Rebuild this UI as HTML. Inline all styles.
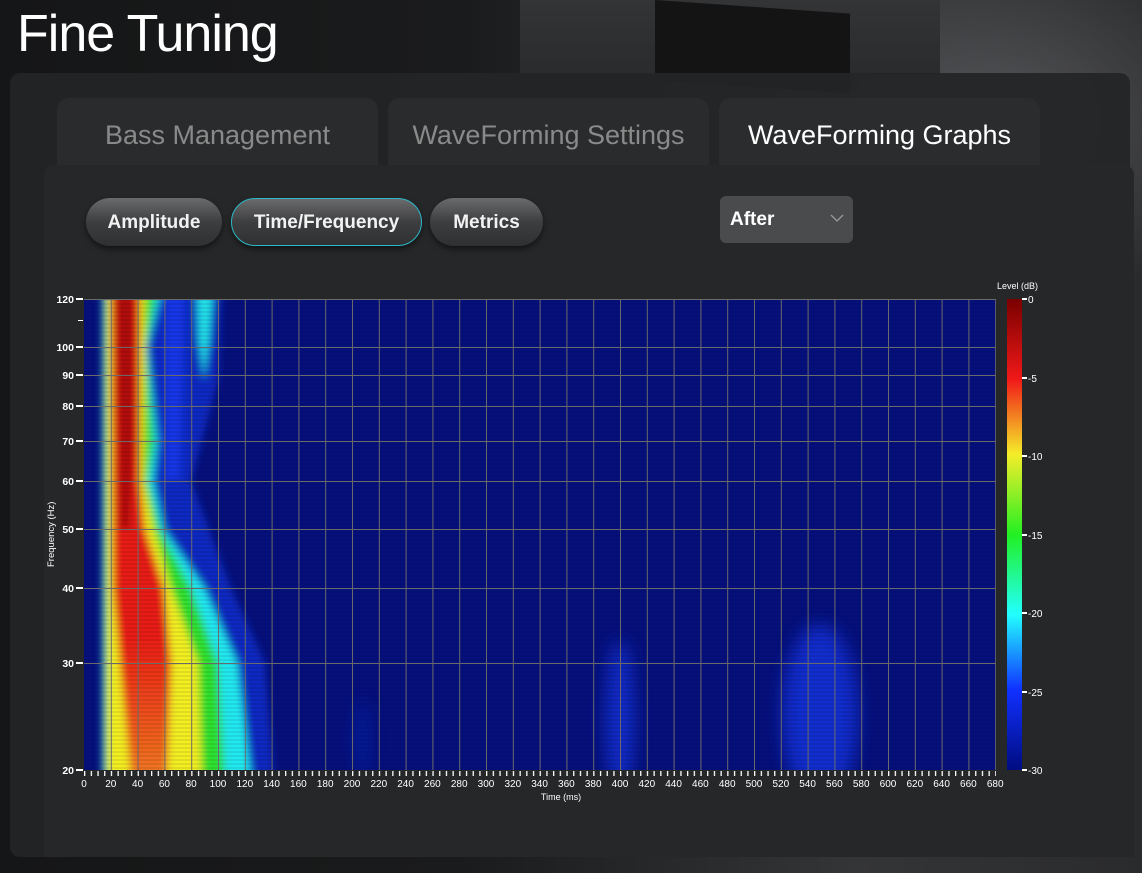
<!DOCTYPE html>
<html><head><meta charset="utf-8"><style>
*{margin:0;padding:0;box-sizing:border-box}
body{width:1142px;height:873px;overflow:hidden;background:#1b1c1d;font-family:"Liberation Sans",sans-serif;position:relative}
.bg{position:absolute;inset:0;background:
radial-gradient(ellipse 380px 260px at 1000px 120px,rgba(120,120,125,.5),transparent 70%),
linear-gradient(90deg,#151617 0,#1a1b1c 40%,#343537 75%,#2a2b2c 100%);}
.dev{position:absolute;left:520px;top:0;width:420px;height:75px;background:linear-gradient(180deg,#333436,#2a2b2d)}
.dev2{position:absolute;left:655px;top:0;width:195px;height:80px;background:#141414;transform:skewY(4deg);transform-origin:left top}
h1{position:absolute;left:17px;top:4px;color:#fff;font-size:52px;font-weight:normal;letter-spacing:-1px}
.panel{position:absolute;left:10px;top:73px;width:1120px;height:784px;border-radius:10px;background:rgba(36,37,38,.93)}
.tab{position:absolute;top:98px;height:70px;width:321px;border-radius:12px 12px 0 0;background:#2a2b2c;color:#8a8a8a;font-size:27px;text-align:center;line-height:74px}
.tab.on{background:#2b2c2d;color:#fff}
.inner{position:absolute;left:44px;top:165px;width:1090px;height:692px;background:#262728;border-radius:10px 10px 0 0}
.btn{position:absolute;top:198px;height:48px;border-radius:24px;background:linear-gradient(#6a6b6d,#3d3e40 50%,#2f3031);color:#f2f2f2;font-size:19px;font-weight:bold;text-align:center;line-height:50px;box-shadow:0 3px 6px rgba(0,0,0,.5)}
.sel{position:absolute;left:720px;top:196px;width:133px;height:47px;border-radius:6px;background:#4a4b4d;color:#fff;font-size:19px;font-weight:bold;line-height:47px;padding-left:10px}
svg text{font-family:"Liberation Sans",sans-serif;fill:#fff}
</style></head><body>
<div class="bg"></div><div class="dev"></div><div class="dev2"></div>
<h1>Fine Tuning</h1>
<div class="panel"></div>
<div class="tab" style="left:57px">Bass Management</div>
<div class="tab" style="left:388px">WaveForming Settings</div>
<div class="tab on" style="left:719px">WaveForming Graphs</div>
<div class="inner"></div>
<div class="btn" style="left:86px;width:136px">Amplitude</div>
<div class="btn" style="left:231px;width:191px;border:1px solid #2bb8c8;line-height:48px">Time/Frequency</div>
<div class="btn" style="left:430px;width:113px">Metrics</div>
<div class="sel">After<svg style="position:absolute;right:9px;top:18px" width="14" height="9"><path d="M1 1 L7 7 L13 1" fill="none" stroke="#9a9a9a" stroke-width="1.3"/></svg></div>
<svg style="position:absolute;left:0;top:0" width="1142" height="873">
<defs>
<filter id="b" x="-20%" y="-20%" width="140%" height="140%"><feGaussianBlur stdDeviation="4"/></filter>
<filter id="b2" x="-50%" y="-50%" width="200%" height="200%"><feGaussianBlur stdDeviation="9"/></filter>
<clipPath id="c"><rect x="84" y="299" width="912" height="471"/></clipPath>
<linearGradient id="rg" x1="0" y1="0" x2="0" y2="1"><stop offset="0.7" stop-color="#e81a14"/><stop offset="1" stop-color="#f07a22"/></linearGradient>
<linearGradient id="cb" x1="0" y1="0" x2="0" y2="1"><stop offset="0" stop-color="#7a0000"/><stop offset=".17" stop-color="#f01818"/><stop offset=".33" stop-color="#f5ee2a"/><stop offset=".5" stop-color="#22f022"/><stop offset=".67" stop-color="#22ffff"/><stop offset=".83" stop-color="#1030ff"/><stop offset="1" stop-color="#000c80"/></linearGradient>
<pattern id="vg" x="84" y="0" width="26.8" height="10" patternUnits="userSpaceOnUse"><rect x="0" y="0" width="1" height="10" fill="#6a6a6a"/></pattern>
<pattern id="tk" x="84" y="0" width="6.7" height="10" patternUnits="userSpaceOnUse"><rect x="0" y="0" width="1.3" height="10" fill="#fff"/></pattern>
<pattern id="st" x="0" y="299" width="4" height="4" patternUnits="userSpaceOnUse"><rect width="4" height="2" fill="rgba(0,0,0,.08)"/></pattern>
</defs>
<g clip-path="url(#c)">
<rect x="84" y="299" width="912" height="471" fill="#06107c"/>
<g filter="url(#b2)" fill="#1438e8" opacity=".75">
<ellipse cx="620" cy="720" rx="14" ry="80"/>
<ellipse cx="820" cy="715" rx="38" ry="90"/>
<ellipse cx="362" cy="740" rx="6" ry="40" opacity=".6"/>
</g>
<g filter="url(#b)">
<polygon fill="#1232d8" opacity=".75" points="102,290 222,290 218,380 191,481 231,588 265,663 274,780 102,780"/>
<polygon fill="#1c40ff" opacity=".6" points="165,290 185,290 180,480 165,480"/>
<polygon fill="#22e8f0" points="103,290 162,290 148,347 158,441 154,481 164,529 205,588 238,663 252,780 103,780"/>
<polygon fill="#22e0e8" points="196,290 214,290 210,340 204,380 198,340"/>
<polygon fill="#2ee02e" points="105,290 157,290 146,347 154,441 148,481 160,529 191,588 218,663 225,780 105,780"/>
<polygon fill="#f2ee22" points="107,290 145,290 144,481 154,529 171,588 198,663 202,780 107,780"/>
<polygon fill="url(#rg)" points="111,290 140,290 140,481 145,529 164,588 171,663 167,780 131,780 120,663 113,588"/>
<polygon fill="#a20a0a" opacity=".85" points="116,295 134,295 134,440 130,529 120,529"/>
</g>
<rect x="84" y="299" width="912" height="471" fill="url(#st)"/>
<rect x="85" y="299" width="912" height="471" fill="url(#vg)"/>
<g fill="#6a6a6a">
<rect x="84" y="347" width="912" height="1"/><rect x="84" y="375" width="912" height="1"/><rect x="84" y="406" width="912" height="1"/><rect x="84" y="441" width="912" height="1"/><rect x="84" y="481" width="912" height="1"/><rect x="84" y="529" width="912" height="1"/><rect x="84" y="588" width="912" height="1"/><rect x="84" y="663" width="912" height="1"/><rect x="84" y="299" width="912" height="1"/>
</g>
</g>
<rect x="84" y="771" width="912" height="5" fill="url(#tk)"/>
<g fill="#fff"><rect x="76" y="298" width="7" height="2"/><rect x="78" y="320" width="5" height="1"/><rect x="76" y="346" width="7" height="2"/><rect x="76" y="374" width="7" height="2"/><rect x="76" y="405" width="7" height="2"/><rect x="76" y="440" width="7" height="2"/><rect x="76" y="480" width="7" height="2"/><rect x="76" y="528" width="7" height="2"/><rect x="76" y="587" width="7" height="2"/><rect x="76" y="662" width="7" height="2"/><rect x="76" y="769" width="7" height="2"/></g>
<g font-size="10.5" font-weight="bold" text-anchor="end">
<text x="74" y="303">120</text><text x="74" y="351">100</text><text x="74" y="379">90</text><text x="74" y="410">80</text><text x="74" y="445">70</text><text x="74" y="485">60</text><text x="74" y="533">50</text><text x="74" y="592">40</text><text x="74" y="667">30</text><text x="74" y="774">20</text>
</g>
<text x="0" y="0" font-size="9.5" transform="translate(54,567) rotate(-90)">Frequency (Hz)</text>
<g font-size="10" text-anchor="middle">
<text x="84" y="787">0</text><text x="110.8" y="787">20</text><text x="137.6" y="787">40</text><text x="164.4" y="787">60</text><text x="191.2" y="787">80</text><text x="218" y="787">100</text><text x="244.8" y="787">120</text><text x="271.6" y="787">140</text><text x="298.4" y="787">160</text><text x="325.2" y="787">180</text><text x="352" y="787">200</text><text x="378.8" y="787">220</text><text x="405.6" y="787">240</text><text x="432.4" y="787">260</text><text x="459.2" y="787">280</text><text x="486" y="787">300</text><text x="512.8" y="787">320</text><text x="539.6" y="787">340</text><text x="566.4" y="787">360</text><text x="593.2" y="787">380</text><text x="620" y="787">400</text><text x="646.8" y="787">420</text><text x="673.6" y="787">440</text><text x="700.4" y="787">460</text><text x="727.2" y="787">480</text><text x="754" y="787">500</text><text x="780.8" y="787">520</text><text x="807.6" y="787">540</text><text x="834.4" y="787">560</text><text x="861.2" y="787">580</text><text x="888" y="787">600</text><text x="914.8" y="787">620</text><text x="941.6" y="787">640</text><text x="968.4" y="787">660</text><text x="995.2" y="787">680</text>
<text x="561" y="800" font-size="9">Time (ms)</text>
</g>
<text x="997" y="289" font-size="9">Level (dB)</text>
<rect x="1007" y="299" width="15" height="471" fill="url(#cb)"/>
<g fill="#fff"><rect x="1022" y="298" width="5" height="2"/><rect x="1022" y="377" width="5" height="2"/><rect x="1022" y="455" width="5" height="2"/><rect x="1022" y="534" width="5" height="2"/><rect x="1022" y="612" width="5" height="2"/><rect x="1022" y="691" width="5" height="2"/><rect x="1022" y="769" width="5" height="2"/></g>
<g font-size="10"><text x="1028" y="303">0</text><text x="1028" y="382">-5</text><text x="1028" y="460">-10</text><text x="1028" y="539">-15</text><text x="1028" y="617">-20</text><text x="1028" y="696">-25</text><text x="1028" y="774">-30</text></g>
</svg>
</body></html>
